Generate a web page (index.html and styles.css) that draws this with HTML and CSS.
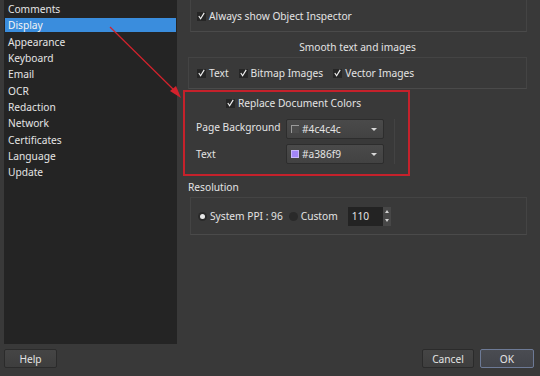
FILE: index.html
```html
<!DOCTYPE html>
<html>
<head>
<meta charset="UTF-8">
<title>Preferences</title>
<link rel="stylesheet" href="styles.css">
</head>
<body>
<div class="main">
    <div class="sidebar">
        <div class="item">Comments</div>
        <div class="item selected">Display</div>
        <div class="item">Appearance</div>
        <div class="item">Keyboard</div>
        <div class="item">Email</div>
        <div class="item">OCR</div>
        <div class="item">Redaction</div>
        <div class="item">Network</div>
        <div class="item">Certificates</div>
        <div class="item">Language</div>
        <div class="item">Update</div>
    </div>
    <div class="content">
        <div class="group inspector">
            <label class="check"><span class="box"><svg viewBox="0 0 10 10"><polyline points="2,5 4,8 8,1.5"/></svg></span>Always show Object Inspector</label>
        </div>
        <div class="title">Smooth text and images</div>
        <div class="group smooth">
            <label class="check"><span class="box"><svg viewBox="0 0 10 10"><polyline points="2,5 4,8 8,1.5"/></svg></span>Text</label>
            <label class="check"><span class="box"><svg viewBox="0 0 10 10"><polyline points="2,5 4,8 8,1.5"/></svg></span>Bitmap Images</label>
            <label class="check"><span class="box"><svg viewBox="0 0 10 10"><polyline points="2,5 4,8 8,1.5"/></svg></span>Vector Images</label>
        </div>
        <div class="colors">
            <div class="colors-head">
                <label class="check"><span class="box"><svg viewBox="0 0 10 10"><polyline points="2,5 4,8 8,1.5"/></svg></span>Replace Document Colors</label>
            </div>
            <div class="color-grid">
                <div class="lbl lbl-up">Page Background</div>
                <div class="combo"><span class="swatch dark"></span>#4c4c4c<span class="drop"></span></div>
                <div class="lbl">Text</div>
                <div class="combo"><span class="swatch violet"></span>#a386f9<span class="drop"></span></div>
            </div>
        </div>
        <div class="section">Resolution</div>
        <div class="group resolution">
            <label class="radio"><span class="dot on"></span>System PPI : 96</label>
            <label class="radio"><span class="dot"></span>Custom</label>
            <div class="spin">
                <span class="spin-val">110</span>
                <span class="spin-btns"><span class="up"></span><span class="down"></span></span>
            </div>
        </div>
    </div>
</div>
<div class="footer">
    <button class="btn help">Help</button>
    <div class="spacer"></div>
    <button class="btn">Cancel</button>
    <button class="btn ok">OK</button>
</div>

<!-- annotation drawn over the screenshot -->
<svg class="marks" width="540" height="376" viewBox="0 0 540 376">
    <line x1="110" y1="27" x2="176" y2="92" />
    <polygon points="181,98 170,91 176,86" />
    <rect x="184" y="91" width="225" height="84" />
</svg>
</body>
</html>
```

FILE: styles.css
```css
body {
  margin: 0;
  width: 540px;
  height: 376px;
  overflow: hidden;
  background: #393939;
  color: #e4e4e4;
  font-family: "Noto Sans", "Open Sans", sans-serif;
  font-size: 10.2px;
  display: flex;
  flex-direction: column;
  position: relative;
}

.main {
  display: flex;
  height: 344px;
}

.sidebar {
  margin-left: 4px;
  width: 173px;
  background: #242424;
  padding-top: 2px;
  box-sizing: border-box;
}

.item {
  height: 14px;
  line-height: 14px;
  margin-bottom: 2.33px;
  padding-left: 3px;
  margin-left: 1px;
  margin-right: 1px;
}

.selected {
  background: #3a8ddd;
  color: #f4f4f4;
}

.content {
  flex: 1;
  display: flex;
  flex-direction: column;
}

.group {
  border: 1px solid #444;
  border-bottom-color: #4a4a4a;
  box-sizing: border-box;
  display: flex;
  align-items: center;
  padding-left: 6px;
  margin-right: 13px;
}

.inspector {
  margin-top: -10px;
  margin-left: 13px;
  height: 42px;
  align-items: flex-end;
  padding-bottom: 8px;
}

.title {
  margin-top: 8px;
  height: 14px;
  line-height: 14px;
  text-align: center;
  margin-left: 11px;
  margin-right: 13px;
}

.smooth {
  margin-top: 3px;
  margin-left: 11px;
  height: 32px;
  padding-left: 8px;
  gap: 10px;
}

.check {
  display: flex;
  align-items: center;
  height: 14px;
  line-height: 14px;
  white-space: nowrap;
}

.box {
  width: 9px;
  height: 9px;
  background: #262626;
  margin-right: 3px;
  position: relative;
}

.box svg {
  position: absolute;
  left: 0;
  top: -1px;
  width: 9px;
  height: 10px;
  fill: none;
  stroke: #f0f0f0;
  stroke-width: 1.3;
}

.colors {
  margin-left: 13px;
  width: 207px;
  box-sizing: border-box;
}

.colors-head {
  margin-top: 7px;
  display: flex;
  justify-content: center;
}

.color-grid {
  margin-top: 9px;
  display: grid;
  grid-template-columns: 90px 98px;
  grid-template-rows: 20px 20px;
  row-gap: 5px;
  padding-left: 6px;
  border-right: 1px solid #434343;
  width: 205px;
  box-sizing: border-box;
}

.lbl {
  line-height: 20px;
  white-space: nowrap;
}

.lbl-up {
  line-height: 16px;
}

.combo {
  display: flex;
  align-items: center;
  background: linear-gradient(#4a4a4a, #424242);
  border: 1px solid #2d2d2d;
  border-radius: 2px;
  padding-left: 4px;
  position: relative;
  box-sizing: border-box;
}

.swatch {
  width: 8px;
  height: 8px;
  margin-right: 3px;
  box-sizing: border-box;
}

.swatch.dark {
  background: #4c4c4c;
  border-left: 1px solid #9a9a9a;
  border-top: 1px solid #9a9a9a;
}

.swatch.violet {
  background: #a386f9;
  border: 1px solid #c8b8fb;
}

.drop {
  position: absolute;
  right: 6px;
  top: 8px;
  border-left: 3px solid transparent;
  border-right: 3px solid transparent;
  border-top: 3px solid #d8d8d8;
}

.section {
  margin-top: 16px;
  margin-left: 11px;
  height: 14px;
  line-height: 14px;
}

.resolution {
  margin-top: 3px;
  margin-left: 13px;
  height: 38px;
  padding-left: 7px;
}

.radio {
  display: flex;
  align-items: center;
  margin-right: 6px;
  white-space: nowrap;
}

.dot {
  width: 9px;
  height: 9px;
  border-radius: 50%;
  background: #2a2a2a;
  margin-right: 3px;
  position: relative;
}

.dot.on::after {
  content: "";
  position: absolute;
  left: 2px;
  top: 2px;
  width: 5px;
  height: 5px;
  border-radius: 50%;
  background: #e8e8e8;
}

.spin {
  display: flex;
  height: 19px;
  margin-left: 4px;
}

.spin-val {
  width: 35px;
  background: #232323;
  line-height: 19px;
  padding-left: 4px;
  box-sizing: border-box;
}

.spin-btns {
  width: 8px;
  background: #474747;
  display: flex;
  flex-direction: column;
  justify-content: space-around;
  align-items: center;
}

.up {
  border-left: 2.5px solid transparent;
  border-right: 2.5px solid transparent;
  border-bottom: 3px solid #d0d0d0;
}

.down {
  border-left: 2.5px solid transparent;
  border-right: 2.5px solid transparent;
  border-top: 3px solid #d0d0d0;
}

.footer {
  display: flex;
  align-items: flex-start;
  padding: 5px 6px 0 4px;
  gap: 6px;
}

.spacer {
  flex: 1;
}

.btn {
  height: 19px;
  background: linear-gradient(#454545, #3e3e3e);
  border: 1px solid #2b2b2b;
  border-radius: 2px;
  color: #e4e4e4;
  font-family: "Noto Sans", "Open Sans", sans-serif;
  font-size: 10.2px;
  padding: 0;
}

.help {
  width: 53px;
}

.btn.ok {
  width: 54px;
  border-color: #6d7a96;
  background: linear-gradient(#4a4c52, #42444a);
}

.btn:not(.help):not(.ok) {
  width: 52px;
}

.marks {
  position: absolute;
  left: 0;
  top: 0;
  pointer-events: none;
}

.marks line {
  stroke: #d4222c;
  stroke-width: 1.2;
}

.marks polygon {
  fill: #d4222c;
}

.marks rect {
  fill: none;
  stroke: #c5212b;
  stroke-width: 2;
}
```
